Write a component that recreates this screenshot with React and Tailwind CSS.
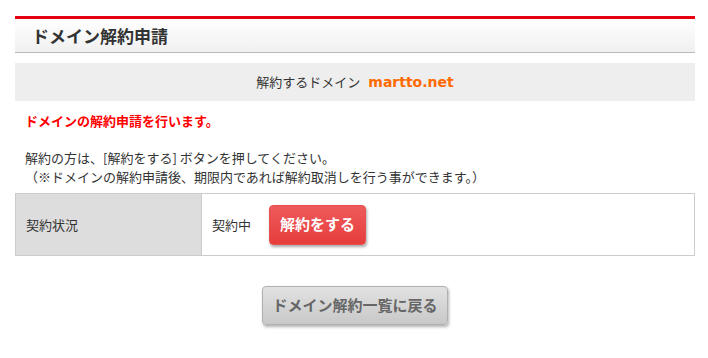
export default function App() {
  const font = { fontFamily: '"Noto Sans CJK JP", "Noto Sans", sans-serif' };
  return (
    <div className="w-[708px] h-[358px] bg-white text-[#333] pt-4" style={font}>
      <div className="ml-[15px] w-[680px]">
        <div className="border-t-[3px] border-[#e60012] border-b border-b-[#bbbbbb] h-[37px] bg-gradient-to-b from-white to-[#f0f0f0] flex items-center pl-[17px]">
          <h1 className="text-[17px] font-bold leading-none text-[#333]">ドメイン解約申請</h1>
        </div>
        <div className="mt-[10px] h-[38px] bg-[#eeeeee] flex items-center justify-center text-[13px]">
          <span>解約するドメイン</span>
          <span className="ml-[8px] font-bold text-[#ff6a00] text-[14px]" style={{ fontFamily: '"DejaVu Sans", sans-serif' }}>martto.net</span>
        </div>
        <p className="mt-[10px] pl-[10px] text-[13px] font-bold text-[#ff0000] leading-[20px]">ドメインの解約申請を行います。</p>
        <div className="mt-[17px] pl-[10px] text-[13px] leading-[19px]">
          <p>解約の方は、[解約をする] ボタンを押してください。</p>
          <p>（※ドメインの解約申請後、期限内であれば解約取消しを行う事ができます。）</p>
        </div>
        <div className="mt-[7px] flex border border-[#cccccc] h-[63px]">
          <div className="w-[186px] bg-[#dddddd] border-r border-[#cccccc] flex items-center pl-[10px] text-[13px]">契約状況</div>
          <div className="flex-1 flex items-center pl-[10px] text-[13px]">
            <span>契約中</span>
            <button className="ml-[18px] w-[97px] h-[40px] rounded-[4px] bg-gradient-to-b from-[#ee5a5a] to-[#e63c3c] text-white font-bold text-[15px] shadow-[1px_2px_3px_rgba(0,0,0,0.35)] border border-[#e85050]">解約をする</button>
          </div>
        </div>
        <div className="mt-[30px] flex justify-center">
          <button className="w-[186px] h-[39px] rounded-[4px] bg-gradient-to-b from-[#e2e2e2] to-[#c8c8c8] border border-[#b0b0b0] text-[#666] font-bold text-[15px] shadow-[1px_2px_3px_rgba(0,0,0,0.3)]">ドメイン解約一覧に戻る</button>
        </div>
      </div>
    </div>
  );
}
